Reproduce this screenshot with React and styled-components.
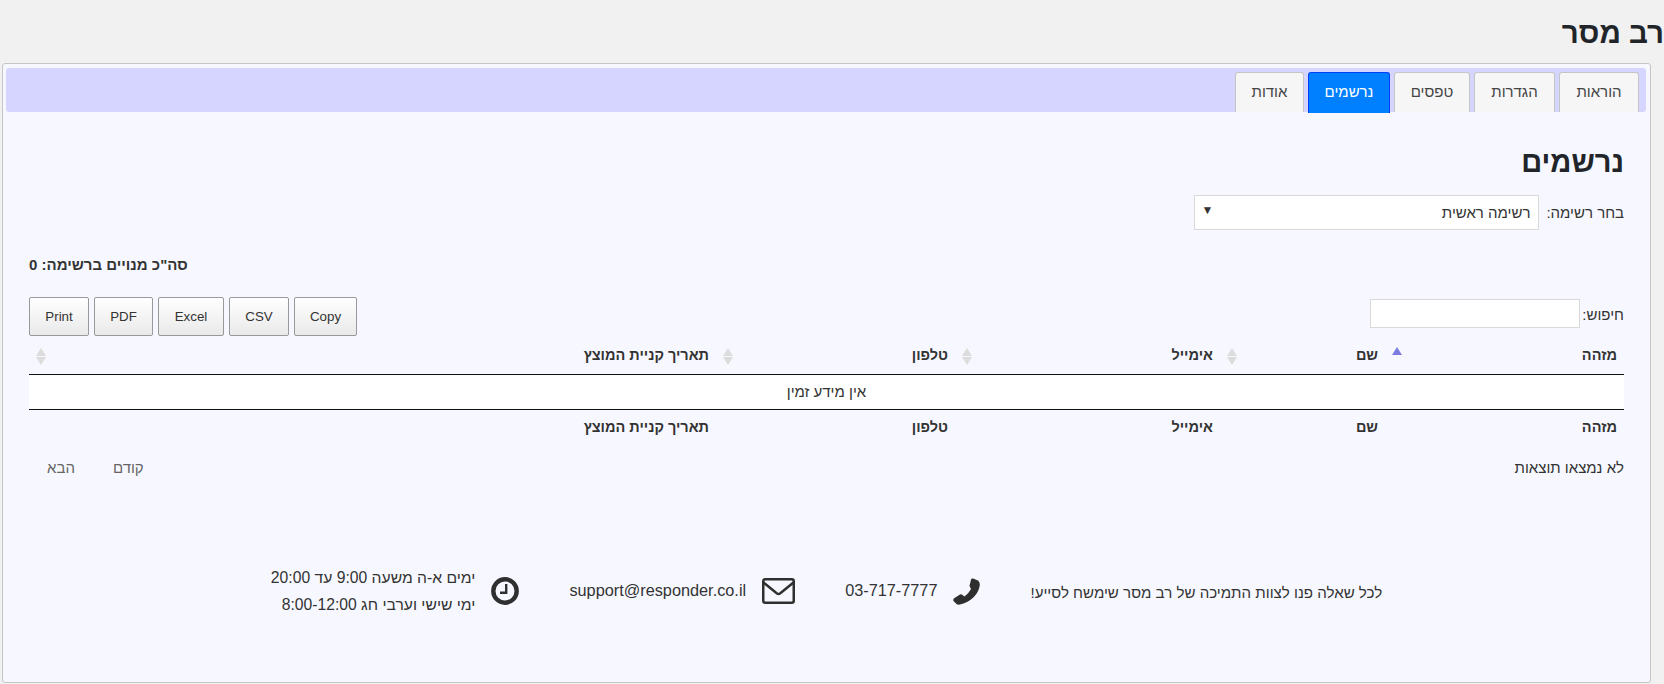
import React from 'react';
import styled, { createGlobalStyle } from 'styled-components';

const GlobalStyle = createGlobalStyle`
    html, body {
        margin: 0;
        padding: 0;
        background-color: #f1f1f1;
        font-family: "Liberation Sans", Arial, sans-serif;
        color: #333;
        overflow: hidden;
    }
`;

const Page = styled.div`
    direction: rtl;
    width: 1664px;
    height: 684px;
`;

const PageTitle = styled.h1`
    margin: 0;
    height: 63px;
    padding-top: 15px;
    box-sizing: border-box;
    font-size: 29.5px;
    line-height: 36px;
    font-weight: 700;
    color: #212529;
`;

const Card = styled.div`
    box-sizing: border-box;
    width: 1649px;
    height: 620px;
    margin-right: 13px;
    padding: 4px 4px 4px 3px;
    background-color: #f7f8ff;
    border: 1px solid #c5c5c5;
    border-radius: 3px;
    display: flex;
    flex-direction: column;
`;

const TabBar = styled.ul`
    list-style: none;
    margin: 0;
    padding: 4px 7px 0 0;
    height: 44px;
    box-sizing: border-box;
    background-color: #d5d5ff;
    border-radius: 3px;
    display: flex;
    gap: 4px;
`;

const Tab = styled.li`
    box-sizing: border-box;
    width: ${p => p.$w}px;
    height: ${p => (p.$active ? '41px' : '40px')};
    line-height: 38px;
    text-align: center;
    font-size: 15px;
    color: ${p => (p.$active ? '#fff' : '#454545')};
    background-color: ${p => (p.$active ? '#007fff' : '#f6f6f6')};
    border: 1px solid ${p => (p.$active ? '#003eff' : '#c5c5c5')};
    border-bottom: none;
    border-radius: 3px 3px 0 0;
`;

const Content = styled.div`
    flex: 1;
    padding: 0 22px 0 23px;
    display: flex;
    flex-direction: column;
`;

const SectionTitle = styled.h2`
    margin: 32px 0 0;
    font-size: 29px;
    line-height: 36px;
    font-weight: 700;
    color: #212529;
`;

const ListRow = styled.div`
    margin-top: 15px;
    height: 35px;
    display: flex;
    align-items: center;
    gap: 7px;
    font-size: 15px;
`;

const SelectBox = styled.div`
    box-sizing: border-box;
    width: 345px;
    height: 35px;
    padding: 0 8px 0 6px;
    background-color: #fff;
    border: 1px solid #d9d9d9;
    display: flex;
    align-items: center;
    justify-content: space-between;
    font-size: 15px;
`;

const Caret = styled.span`
    font-size: 12px;
    color: #333;
    margin-bottom: 5px;
`;

const TotalLine = styled.div`
    margin-top: 25px;
    height: 20px;
    line-height: 20px;
    direction: rtl;
    text-align: left;
    font-size: 15px;
    font-weight: 700;
`;

const ToolRow = styled.div`
    margin-top: 22px;
    height: 39px;
    display: flex;
    justify-content: space-between;
    align-items: flex-start;
`;

const SearchLabel = styled.label`
    display: flex;
    align-items: center;
    gap: 2px;
    height: 34px;
    font-size: 15px;
`;

const SearchBox = styled.div`
    box-sizing: border-box;
    width: 210px;
    height: 29px;
    margin-bottom: 2px;
    background-color: #fff;
    border: 1px solid #d9d9d9;
`;

const ButtonGroup = styled.div`
    display: flex;
    gap: 5px;
`;

const ExportButton = styled.div`
    box-sizing: border-box;
    height: 39px;
    width: ${p => p.$w}px;
    line-height: 37px;
    text-align: center;
    font-size: 13.33px;
    color: #333;
    background: linear-gradient(to bottom, #fff 0%, #e9e9e9 100%);
    border: 1px solid #999;
    border-radius: 2px;
`;

const Table = styled.table`
    width: 100%;
    table-layout: fixed;
    border-collapse: collapse;
    font-size: 14.5px;
`;

const HeadCell = styled.th`
    position: relative;
    box-sizing: border-box;
    width: ${p => p.$w}px;
    height: ${p => p.$h}px;
    padding: 0 ${p => p.$pad ?? 25}px 0 0;
    text-align: right;
    font-weight: 700;
    color: #333;
`;

const HeadRow = styled.tr`
    border-bottom: 1px solid #111;
`;

const FootRow = styled.tr`
    border-top: 1px solid #111;
`;

const BodyCell = styled.td`
    height: 34px;
    padding: 0;
    background-color: #fff;
    text-align: center;
    font-size: 15px;
`;

const SortBoth = styled.span`
    position: absolute;
    top: 11px;
    right: 0;
    width: 12px;
    height: 19px;
    display: flex;
    flex-direction: column;
    justify-content: center;
    align-items: center;
    gap: 1px;
    &::before, &::after {
        content: "";
        width: 0;
        height: 0;
        border-left: 5px solid transparent;
        border-right: 5px solid transparent;
    }
    &::before { border-bottom: 8px solid #dcdcdc; }
    &::after { border-top: 8px solid #dcdcdc; }
`;

const SortAsc = styled.span`
    position: absolute;
    top: 11px;
    right: 1px;
    width: 0;
    height: 0;
    border-left: 5px solid transparent;
    border-right: 5px solid transparent;
    border-bottom: 8px solid #7c7ce0;
`;

const InfoRow = styled.div`
    margin-top: 9px;
    display: flex;
    justify-content: space-between;
    align-items: center;
    font-size: 15px;
    height: 26px;
`;

const Pager = styled.div`
    display: flex;
    color: #666;
    margin-left: 18px;
    gap: 38px;
`;

const Support = styled.div`
    margin-top: 84px;
    display: flex;
    justify-content: center;
    align-items: center;
    gap: 50px;
`;

const SupportItem = styled.div`
    display: flex;
    align-items: center;
    gap: 16px;
`;

const LeadText = styled.div`
    margin-top: 3px;
    font-size: 15.1px;
`;

const ContactText = styled.div`
    direction: ltr;
    font-size: 16.3px;
    margin-bottom: 2px;
`;

const HoursText = styled.div`
    line-height: 27px;
    font-size: 15.7px;
`;

const PhoneIcon = () => (
    <svg width="27" height="27" viewBox="0 0 27 27" fill="#2f2f2f">
        <path d="M20 0.5 L25 2.5 Q27 4 26.8 7 C26 15 19 24 7 26.5 Q5 27 3.5 26 L0.5 23 Q-0.3 21 1.5 20 L7 16.5 Q8.5 16 9.5 17 L11.5 18.5 Q16 15 18 11 L17 9 Q16 7.5 17 6 L18 1.5 Q18.5 0 20 0.5 Z" />
    </svg>
);

const MailIcon = () => (
    <svg width="33" height="26" viewBox="0 0 33 26" fill="none" stroke="#2f2f2f" strokeWidth="2.5">
        <rect x="1.25" y="1.25" width="30.5" height="23.5" rx="2" />
        <path d="M1.5 4.5 L15 15.5 Q16.5 16.5 18 15.5 L31.5 4.5" />
    </svg>
);

const ClockIcon = () => (
    <svg width="28" height="28" viewBox="0 0 28 28" fill="none" stroke="#2f2f2f">
        <circle cx="14" cy="14" r="11.7" strokeWidth="4.4" />
        <path d="M15.2 7 V15.8 H9" strokeWidth="2.4" />
    </svg>
);

const App = () => {
    return (
        <Page>
            <GlobalStyle />
            <PageTitle>רב מסר</PageTitle>
            <Card>
                <TabBar>
                    <Tab $w={80}>הוראות</Tab>
                    <Tab $w={81}>הגדרות</Tab>
                    <Tab $w={76}>טפסים</Tab>
                    <Tab $w={82} $active>נרשמים</Tab>
                    <Tab $w={69}>אודות</Tab>
                </TabBar>
                <Content>
                    <SectionTitle>נרשמים</SectionTitle>
                    <ListRow>
                        <span>בחר רשימה:</span>
                        <SelectBox>
                            <span>רשימה ראשית</span>
                            <Caret>▼</Caret>
                        </SelectBox>
                    </ListRow>
                    <TotalLine>סה"כ מנויים ברשימה: 0</TotalLine>
                    <ToolRow>
                        <SearchLabel>
                            <span>חיפוש:</span>
                            <SearchBox />
                        </SearchLabel>
                        <ButtonGroup>
                            <ExportButton $w={63}>Copy</ExportButton>
                            <ExportButton $w={60}>CSV</ExportButton>
                            <ExportButton $w={66}>Excel</ExportButton>
                            <ExportButton $w={59}>PDF</ExportButton>
                            <ExportButton $w={60}>Print</ExportButton>
                        </ButtonGroup>
                    </ToolRow>
                    <Table>
                        <thead>
                            <HeadRow>
                                <HeadCell $h={38} $w={221} $pad={7}>מזהה</HeadCell>
                                <HeadCell $h={38} $w={165}>שם<SortAsc /></HeadCell>
                                <HeadCell $h={38} $w={265}>אימייל<SortBoth /></HeadCell>
                                <HeadCell $h={38} $w={239}>טלפון<SortBoth /></HeadCell>
                                <HeadCell $h={38} $w={687}>תאריך קניית המוצץ<SortBoth /></HeadCell>
                                <HeadCell $h={38} $w={18} $pad={0}><SortBoth /></HeadCell>
                            </HeadRow>
                        </thead>
                        <tbody>
                            <tr>
                                <BodyCell colSpan={6}>אין מידע זמין</BodyCell>
                            </tr>
                        </tbody>
                        <tfoot>
                            <FootRow>
                                <HeadCell $h={36} $pad={7}>מזהה</HeadCell>
                                <HeadCell $h={36}>שם</HeadCell>
                                <HeadCell $h={36}>אימייל</HeadCell>
                                <HeadCell $h={36}>טלפון</HeadCell>
                                <HeadCell $h={36}>תאריך קניית המוצץ</HeadCell>
                                <HeadCell $h={36} $pad={0} />
                            </FootRow>
                        </tfoot>
                    </Table>
                    <InfoRow>
                        <span>לא נמצאו תוצאות</span>
                        <Pager>
                            <span>קודם</span>
                            <span>הבא</span>
                        </Pager>
                    </InfoRow>
                    <Support>
                        <LeadText>לכל שאלה פנו לצוות התמיכה של רב מסר שימשח לסייע!</LeadText>
                        <SupportItem>
                            <PhoneIcon />
                            <ContactText>03-717-7777</ContactText>
                        </SupportItem>
                        <SupportItem>
                            <MailIcon />
                            <ContactText>support@responder.co.il</ContactText>
                        </SupportItem>
                        <SupportItem>
                            <ClockIcon />
                            <HoursText>
                                <div>ימים א-ה משעה 9:00 עד 20:00</div>
                                <div>ימי שישי וערבי חג 8:00-12:00</div>
                            </HoursText>
                        </SupportItem>
                    </Support>
                </Content>
            </Card>
        </Page>
    );
};

export default App;
